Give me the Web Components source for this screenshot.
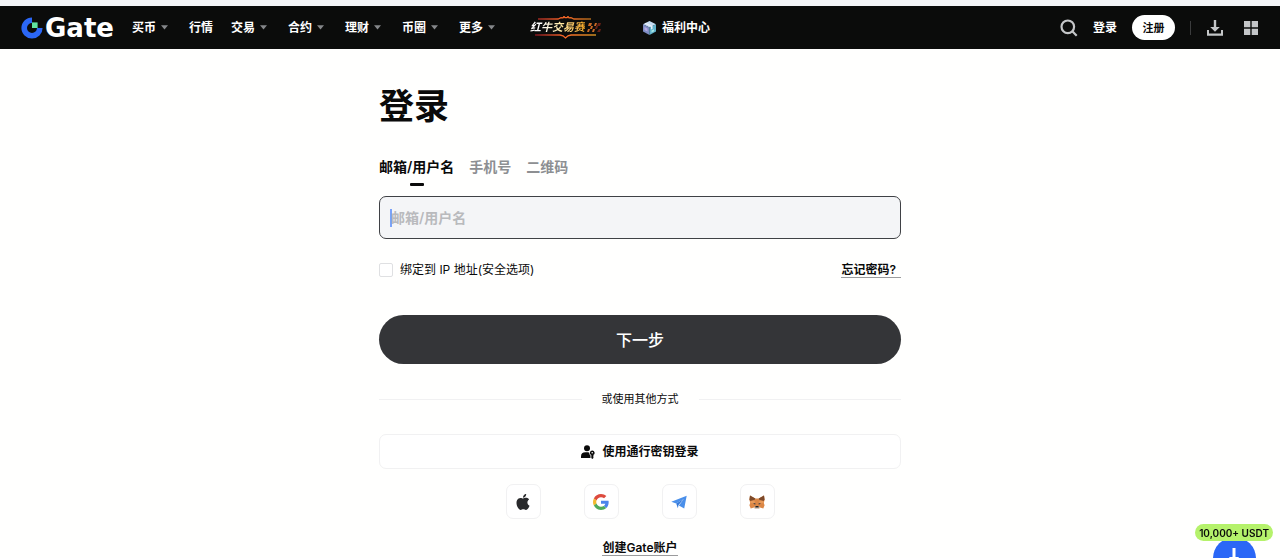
<!DOCTYPE html>
<html lang="zh-CN">
<head>
<meta charset="utf-8">
<meta name="viewport" content="width=device-width, initial-scale=1">
<title>登录 | Gate</title>
<style>
:root {
    --color-ink: #0a0a0a;
    --color-bar: #0b0c0b;
    --color-muted: #8d8f92;
    --color-line: #f1f1f2;
    --color-blue: #2b67f6;
    --font-size-small: 11px;
    --font-size-base: 12px;
    --font-size-tab: 14px;
}

body {
    margin: 0;
    background: #fffffe;
    color: var(--color-ink);
    font-family: Inter, "Noto Sans CJK SC", sans-serif;
    font-size: var(--font-size-base);
    line-height: 20px;
}
</style>
</head>
<body>
<gate-header></gate-header>
<login-form></login-form>
<download-float>10,000+ USDT</download-float>

<script>
function attach(element, html) {
    const template = document.createElement('template');
    template.innerHTML = html;
    element.attachShadow({ mode: 'open' });
    element.shadowRoot.appendChild(template.content.cloneNode(true));
}

class GateLogo extends HTMLElement {
    constructor() {
        super();
        attach(this, `
<style>
:host {
    display: block;
}

a {
    display: flex;
    align-items: center;
    gap: 2px;
    color: #fff;
    font-family: "DejaVu Sans", sans-serif;
    font-size: 26px;
    font-weight: 700;
    line-height: 32px;
    text-decoration: none;
}
</style>
<a href="#">
    <svg width="22" height="22" viewBox="0 0 22 22" aria-hidden="true">
        <path d="M11 3.200A7.800 7.800 0 1 0 18.800 11" fill="none" stroke="#2b67f6" stroke-width="5.600"/>
        <path d="M11 5.400h5.600V11H11z" fill="#5fe3a1"/>
    </svg>
    <span>Gate</span>
</a>`);
    }
}

class NavItem extends HTMLElement {
    constructor() {
        super();
        const menu = this.hasAttribute('menu');
        const arrow = '<svg width="10" height="5" viewBox="0 0 10 5" aria-hidden="true"><path d="M0 .3h7L3.500 4.600z" fill="#85878a"/></svg>';
        attach(this, `
<style>
:host {
    display: block;
}

a,
button {
    display: flex;
    align-items: center;
    gap: 5px;
    padding: 0;
    border: 0;
    background: none;
    color: #fff;
    font: inherit;
    font-weight: 600;
    white-space: nowrap;
    text-decoration: none;
    cursor: pointer;
}
</style>
${menu ? `<button type="button"><slot></slot>${arrow}</button>` : '<a href="#"><slot></slot></a>'}`);
    }
}

class PromoBanner extends HTMLElement {
    constructor() {
        super();
        attach(this, `
<style>
:host {
    display: block;
}

a {
    display: grid;
    justify-items: start;
    text-decoration: none;
}

svg {
    display: block;
}

.row {
    display: flex;
    align-items: center;
    gap: 2px;
}

span {
    background: linear-gradient(90deg, #fff 20%, #ffe9a8 55%, #f5a623);
    background-clip: text;
    -webkit-background-clip: text;
    color: transparent;
    font-size: var(--font-size-small);
    font-style: italic;
    font-weight: 700;
    line-height: 14px;
}
</style>
<a href="#">
    <svg width="70" height="4" viewBox="0 0 70 4" aria-hidden="true">
        <defs>
            <linearGradient id="edge" gradientUnits="userSpaceOnUse" x1="0" y1="0" x2="70" y2="0">
                <stop offset="0" stop-color="#7d1420"/>
                <stop offset=".5" stop-color="#ff6a28"/>
                <stop offset="1" stop-color="#8a6514"/>
            </linearGradient>
        </defs>
        <path d="M8 3h20l3-1.400 2 .2 1-1.300 1 1.200h2l1-1.200 1 1.300 2-.2 3 1.400h17" fill="none" stroke="url(#edge)" stroke-width="1.300"/>
    </svg>
    <div class="row">
        <span>红牛交易赛</span>
        <svg width="15" height="9" viewBox="0 0 15 9" aria-hidden="true">
            <path d="M2 0h3L4 3h3L8 0h2L9 3H6L5 6h3L7 9H5l1-3H3L2 9H0l1-3h2l1-3H1z" fill="#c96926"/>
            <path d="M11 0h3l-1 3h-3zM9 3h2l-1 3H8zM12 6h2l-1 3h-3z" fill="#672016"/>
        </svg>
    </div>
    <svg width="70" height="5" viewBox="0 0 70 5" aria-hidden="true">
        <defs>
            <linearGradient id="base" gradientUnits="userSpaceOnUse" x1="5" y1="0" x2="66" y2="0">
                <stop offset="0" stop-color="#7d1420"/>
                <stop offset=".5" stop-color="#ff6a28"/>
                <stop offset="1" stop-color="#c98b20"/>
            </linearGradient>
        </defs>
        <path d="M5 1h25l3 .8 2.500 2.200L38 1.800 41 1h25" fill="none" stroke="url(#base)" stroke-width="1.300"/>
    </svg>
</a>`);
    }
}

class GateHeader extends HTMLElement {
    constructor() {
        super();
        attach(this, `
<style>
:host {
    display: block;
    border-top: 6px solid #f4f5f8;
}

header {
    display: flex;
    align-items: center;
    justify-content: space-between;
    height: 43px;
    padding: 0 20px 0 21px;
    background: var(--color-bar);
}

nav,
.tools {
    display: flex;
    align-items: center;
}

nav {
    gap: 18px;
}

promo-banner {
    margin-left: 14px;
}

.rewards {
    margin-left: 22px;
}

.tools {
    gap: 15px;
}

.tools svg,
nav svg {
    display: block;
}

.icon {
    padding: 0;
    border: 0;
    background: none;
    cursor: pointer;
}

.icon + .icon {
    margin-left: 3px;
}

.register {
    width: 43px;
    height: 25px;
    padding: 0;
    border: 0;
    border-radius: 13px;
    background: #fff;
    color: var(--color-ink);
    font: inherit;
    font-size: var(--font-size-small);
    font-weight: 600;
}

.rule {
    width: 1px;
    height: 14px;
    background: #3b3c3d;
}
</style>
<header>
    <nav aria-label="主导航">
        <gate-logo></gate-logo>
        <nav-item menu>买币</nav-item>
        <nav-item>行情</nav-item>
        <nav-item menu>交易</nav-item>
        <nav-item menu>合约</nav-item>
        <nav-item menu>理财</nav-item>
        <nav-item menu>币圈</nav-item>
        <nav-item menu>更多</nav-item>
        <promo-banner></promo-banner>
        <nav-item class="rewards">
            <svg width="15" height="14" viewBox="0 0 15 14" aria-hidden="true">
                <path d="M7.500 0 14 3.200 7.500 6.400 1 3.200z" fill="#c5dcf2"/>
                <path d="M1 3.200 7.500 6.400V14L1 10.600z" fill="#7d8cc4"/>
                <path d="M14 3.200 7.500 6.400V14L14 10.600z" fill="#62b2cb"/>
                <path d="m4 1.800 6.500 3.200V8L9 8.500V5.700L2.600 2.500z" fill="#e8effb"/>
                <path d="m2.500 6 3 1.500v3l-3-1.500z" fill="#b5a9e2"/>
                <path d="m9.500 9.500 2.500-1.300v2l-2.500 1.300z" fill="#a9e7e5"/>
            </svg>
            福利中心
        </nav-item>
    </nav>
    <div class="tools">
        <button class="icon" type="button" aria-label="搜索">
            <svg width="18" height="18" viewBox="0 0 18 18" fill="none" stroke="#c4c6c8" stroke-width="2.200">
                <circle cx="7.800" cy="7.800" r="6.300"/>
                <path d="m12.300 12.300 4.400 4.400"/>
            </svg>
        </button>
        <nav-item>登录</nav-item>
        <button class="register" type="button">注册</button>
        <div class="rule"></div>
        <button class="icon" type="button" aria-label="下载">
            <svg width="18" height="18" viewBox="0 0 18 18" fill="#c4c6c8">
                <path d="M7.800 1h2.400v7h3.600L9 12.800 4.200 8h3.600z"/>
                <path d="M1 11h2v3.500h12V11h2v5.700H1z"/>
            </svg>
        </button>
        <button class="icon" type="button" aria-label="更多功能">
            <svg width="18" height="18" viewBox="0 0 18 18" fill="#c4c6c8">
                <path d="M2 2h6.300v6.300H2zM9.700 2H16v6.300H9.700zM2 9.700h6.300V16H2zM9.700 9.700H16V16H9.700z"/>
            </svg>
        </button>
    </div>
</header>`);
    }
}

class LoginTabs extends HTMLElement {
    constructor() {
        super();
        attach(this, `
<style>
:host {
    display: block;
}

div {
    display: flex;
    gap: 15px;
}

button {
    display: grid;
    justify-items: center;
    gap: 6px;
    padding: 0;
    border: 0;
    background: none;
    color: var(--color-muted);
    font: inherit;
    font-size: var(--font-size-tab);
    font-weight: 600;
    cursor: pointer;
}

button::after {
    content: "";
    width: 14px;
    height: 3px;
    border-radius: 1px;
}

button[aria-selected="true"] {
    color: var(--color-ink);
}

button[aria-selected="true"]::after {
    background: var(--color-ink);
}
</style>
<div role="tablist">
    <button type="button" role="tab" aria-selected="true">邮箱/用户名</button>
    <button type="button" role="tab" aria-selected="false">手机号</button>
    <button type="button" role="tab" aria-selected="false">二维码</button>
</div>`);
        this.tabs = this.shadowRoot.querySelectorAll('button');
        this.tabs.forEach((tab) => {
            tab.addEventListener('click', () => this.select(tab));
        });
    }

    select(current) {
        this.tabs.forEach((tab) => {
            tab.setAttribute('aria-selected', tab === current);
        });
    }
}

class SocialButton extends HTMLElement {
    constructor() {
        super();
        attach(this, `
<style>
:host {
    display: block;
}

button {
    display: grid;
    place-items: center;
    width: 35px;
    height: 35px;
    padding: 0;
    border: 1px solid var(--color-line);
    border-radius: 7px;
    background: #fff;
    cursor: pointer;
}
</style>
<button type="button" aria-label="${this.getAttribute('name')}"><slot></slot></button>`);
    }
}

class LoginForm extends HTMLElement {
    constructor() {
        super();
        attach(this, `
<style>
:host {
    display: block;
    max-width: 522px;
    margin: 0 auto;
    padding-top: 37px;
}

h1 {
    margin: 0 0 31px;
    font-size: 35px;
    font-weight: 700;
    line-height: 40px;
}

form,
.options,
.check,
.divider,
.passkey,
.social,
.create {
    display: flex;
}

form {
    flex-direction: column;
}

.account {
    box-sizing: border-box;
    width: 100%;
    height: 43px;
    margin-top: 10px;
    padding: 0 11px;
    border: 1px solid #3f4145;
    border-radius: 7px;
    outline: 0;
    background: linear-gradient(#7ba2f9, #7ba2f9) 10px center / 2px 18px no-repeat #f4f5f7;
    color: var(--color-ink);
    font: inherit;
    font-size: var(--font-size-tab);
    font-weight: 600;
}

.account::placeholder {
    color: #b9babd;
}

.options {
    align-items: center;
    justify-content: space-between;
    margin-top: 21px;
}

.check {
    align-items: center;
    gap: 7px;
}

.check input {
    appearance: none;
    width: 14px;
    height: 14px;
    margin: 0;
    border: 1px solid #dfe0e2;
    border-radius: 2px;
    background: #fff;
}

.check input:checked {
    background: var(--color-ink);
}

a {
    color: inherit;
    font-weight: 600;
    text-decoration: none;
}

a span {
    display: block;
    border-bottom: 1px solid #9a9b9d;
    line-height: 14px;
}

.forgot span {
    padding-right: 5px;
}

.next {
    height: 49px;
    margin-top: 35px;
    border: 0;
    border-radius: 25px;
    background: #343538;
    color: #fff;
    font: inherit;
    font-size: 16px;
    font-weight: 500;
    cursor: pointer;
}

.divider {
    align-items: center;
    gap: 20px;
    margin-top: 25px;
    font-size: var(--font-size-small);
}

.divider::before,
.divider::after {
    content: "";
    flex: 1;
    height: 1px;
    background: var(--color-line);
}

.passkey {
    align-items: center;
    justify-content: center;
    gap: 7px;
    height: 35px;
    margin-top: 25px;
    border: 1px solid var(--color-line);
    border-radius: 7px;
    background: #fff;
    color: var(--color-ink);
    font: inherit;
    font-weight: 600;
    cursor: pointer;
}

.social {
    justify-content: center;
    gap: 43px;
    margin-top: 15px;
}

.create {
    justify-content: center;
    margin-top: 22px;
}
</style>
<h1>登录</h1>
<login-tabs></login-tabs>
<form>
    <input class="account" type="text" placeholder="邮箱/用户名" aria-label="邮箱/用户名" autocomplete="username">
    <div class="options">
        <label class="check"><input type="checkbox">绑定到 IP 地址(安全选项)</label>
        <a class="forgot" href="#"><span>忘记密码?</span></a>
    </div>
    <button class="next" type="submit">下一步</button>
    <div class="divider">或使用其他方式</div>
    <button class="passkey" type="button">
        <svg width="14" height="14" viewBox="0 0 14 14" fill="#0a0a0a" aria-hidden="true">
            <circle cx="6" cy="3.300" r="3"/>
            <path d="M0 13V11.500Q0 7.300 4.500 7.300H7.200Q8 7.300 8.200 8 8.300 9.500 9.500 10.500V13z"/>
            <path fill-rule="evenodd" d="M11.200 5.500a2.400 2.400 0 0 0-.9 4.600v3l1 .9 1.400-1.300-.7-.8.7-.8-.5-1a2.400 2.400 0 0 0-1-4.600zm0 1.500a.8.8 0 1 1 0 1.600.8.8 0 0 1 0-1.600z"/>
        </svg>
        使用通行密钥登录
    </button>
</form>
<div class="social">
    <social-button name="Apple">
        <svg width="16" height="16" viewBox="0 0 24 24" fill="#28292b">
            <path d="M12.152 6.896c-.948 0-2.415-1.078-3.960-1.040-2.040.027-3.910 1.183-4.961 3.014-2.117 3.675-.546 9.103 1.519 12.090 1.013 1.454 2.208 3.090 3.792 3.039 1.520-.065 2.090-.987 3.935-.987 1.831 0 2.350.987 3.960.948 1.637-.026 2.676-1.480 3.676-2.948 1.156-1.688 1.636-3.325 1.662-3.415-.039-.013-3.182-1.221-3.220-4.857-.026-3.040 2.480-4.494 2.597-4.559-1.429-2.090-3.623-2.324-4.390-2.376-2-.156-3.675 1.090-4.610 1.090zM15.530 3.830c.843-1.012 1.400-2.427 1.245-3.830-1.207.052-2.662.805-3.532 1.818-.780.896-1.454 2.338-1.273 3.714 1.338.104 2.715-.688 3.559-1.701"/>
        </svg>
    </social-button>
    <social-button name="Google">
        <svg width="16" height="16" viewBox="0 0 48 48">
            <path fill="#dd4b3e" d="M24 9.500c3.540 0 6.710 1.220 9.210 3.600l6.850-6.850C35.900 2.380 30.470 0 24 0 14.620 0 6.510 5.380 2.560 13.220l7.980 6.190C12.430 13.720 17.740 9.500 24 9.500z"/>
            <path fill="#4b84ec" d="M46.980 24.550c0-1.570-.15-3.090-.38-4.550H24v9.020h12.940c-.58 2.960-2.260 5.480-4.780 7.180l7.730 6c4.510-4.180 7.090-10.360 7.090-17.650z"/>
            <path fill="#f2ba2e" d="M10.530 28.590A14.500 14.500 0 0 1 9.770 24c0-1.600.27-3.140.76-4.590l-7.980-6.190A24 24 0 0 0 0 24c0 3.880.92 7.540 2.560 10.780z"/>
            <path fill="#4fa95b" d="M24 48c6.480 0 11.930-2.130 15.890-5.810l-7.730-6c-2.150 1.450-4.920 2.300-8.160 2.300-6.260 0-11.570-4.220-13.470-9.910l-7.980 6.190C6.510 42.620 14.620 48 24 48z"/>
        </svg>
    </social-button>
    <social-button name="Telegram">
        <svg width="16" height="16" viewBox="0 0 16 16">
            <path d="M.3 7.800 15.700 1.700 13.200 14.500 7.900 11.500 12.800 4.900 5.200 9.600z" fill="#4a8fea"/>
            <path d="M5.200 9.600 12.800 4.900 7.500 10.900 6.900 14.300z" fill="#3479db"/>
        </svg>
    </social-button>
    <social-button name="MetaMask">
        <svg width="16" height="16" viewBox="0 0 16 16">
            <path d="M1 1.500 6.300 4.400h3.400L15 1.500l.6 4.200-.8 3.200.8 2.300-1.300 3.300-3.300-.9L9.700 15H6.300L5 13.600l-3.300.9-1.300-3.300.8-2.300L.4 5.700z" fill="#dc8745"/>
            <path d="M1 1.500 6.300 4.400 5.400 6.300 1.500 7 .4 5.700zM15 1.500 9.700 4.400l.9 1.900 3.900.7 1.100-1.300z" fill="#7c4a2b"/>
            <path d="M1.500 7 5.400 6.300 6 9.500 1.200 8.900zM14.500 7l-3.900-.7-.6 3.200 4.800-.6z" fill="#e99a59"/>
            <path d="m4 9 2.500.5-.4 1.300zM12 9l-2.500.5.4 1.300z" fill="#263344"/>
            <path d="M5 13.600 6.500 12h3l1.500 1.600L9.700 15H6.300z" fill="#d9c9bc"/>
            <path d="M6.500 12h3l.3 1.500H6.200z" fill="#24211f"/>
        </svg>
    </social-button>
</div>
<div class="create"><a href="#"><span>创建Gate账户</span></a></div>`);
        this.shadowRoot.querySelector('form').addEventListener('submit', (event) => {
            event.preventDefault();
        });
    }
}

class DownloadFloat extends HTMLElement {
    constructor() {
        super();
        attach(this, `
<style>
:host {
    position: fixed;
    right: 7px;
    bottom: 0;
    display: grid;
    justify-items: center;
    height: 34px;
    overflow: hidden;
}

.badge {
    z-index: 1;
    height: 17px;
    padding: 0 4px;
    border-radius: 9px;
    background: #b5f26b;
    font-size: 10px;
    font-weight: 600;
    line-height: 18px;
}

button {
    display: grid;
    justify-items: center;
    width: 43px;
    height: 43px;
    margin-top: -4px;
    padding: 11px 0 0;
    border: 0;
    border-radius: 50%;
    background: var(--color-blue);
    cursor: pointer;
}
</style>
<div class="badge"><slot></slot></div>
<button type="button" aria-label="下载应用">
    <svg width="16" height="20" viewBox="0 0 16 20" fill="#fff" aria-hidden="true">
        <path d="M6.500 0h3v9h3.700L8 14.500 2.800 9h3.700zM1 17h14v3H1z"/>
    </svg>
</button>`);
    }
}

window.customElements.define('gate-logo', GateLogo);
window.customElements.define('nav-item', NavItem);
window.customElements.define('promo-banner', PromoBanner);
window.customElements.define('gate-header', GateHeader);
window.customElements.define('login-tabs', LoginTabs);
window.customElements.define('social-button', SocialButton);
window.customElements.define('login-form', LoginForm);
window.customElements.define('download-float', DownloadFloat);
</script>
</body>
</html>
